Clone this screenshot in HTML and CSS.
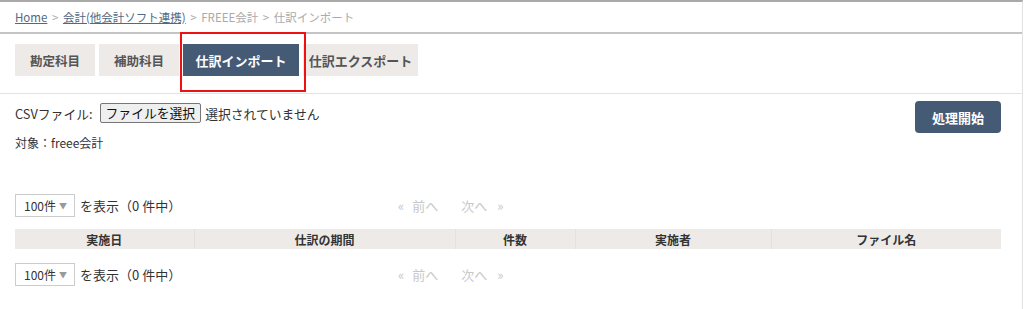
FILE: index.html
```html
<!DOCTYPE html>
<html lang="ja">
<head>
    <meta charset="UTF-8">
    <title>仕訳インポート</title>
    <link rel="stylesheet" href="styles.css">
</head>
<body>
    <div class="page">
        <div class="breadcrumb">
            <a href="#">Home</a>
            <span class="sep">&gt;</span>
            <a href="#">会計(他会計ソフト連携)</a>
            <span class="sep">&gt;</span>
            <span class="crumb">FREEE会計</span>
            <span class="sep">&gt;</span>
            <span class="crumb">仕訳インポート</span>
        </div>
        <div class="tabs">
            <a class="tab" href="#">勘定科目</a>
            <a class="tab" href="#">補助科目</a>
            <a class="tab active" href="#">仕訳インポート</a>
            <a class="tab" href="#">仕訳エクスポート</a>
            <div class="highlight"></div>
        </div>
        <div class="content">
            <div class="import-row">
                <div class="import-form">
                    <div class="file-row">
                        <span>CSVファイル:</span>
                        <span class="file-btn">ファイルを選択</span>
                        <span>選択されていません</span>
                    </div>
                    <div class="target">対象：freee会計</div>
                </div>
                <button class="start-btn">処理開始</button>
            </div>

            <div class="pager">
                <div class="per-page">
                    <span class="select">100件 <span class="caret">▼</span></span>
                    <span>を表示（0 件中）</span>
                </div>
                <div class="paging">
                    <span>«</span><span class="prev">前へ</span><span class="next">次へ</span><span>»</span>
                </div>
            </div>

            <table class="list">
                <thead>
                    <tr>
                        <th class="c1">実施日</th>
                        <th class="c2">仕訳の期間</th>
                        <th class="c3">件数</th>
                        <th class="c4">実施者</th>
                        <th class="c5">ファイル名</th>
                    </tr>
                </thead>
            </table>

            <div class="pager">
                <div class="per-page">
                    <span class="select">100件 <span class="caret">▼</span></span>
                    <span>を表示（0 件中）</span>
                </div>
                <div class="paging">
                    <span>«</span><span class="prev">前へ</span><span class="next">次へ</span><span>»</span>
                </div>
            </div>
        </div>
    </div>
</body>
</html>
```

FILE: styles.css
```css
* {
    margin: 0;
    padding: 0;
    box-sizing: border-box;
}
body {
    font-family: "Noto Sans CJK JP", "Noto Sans", sans-serif;
    font-size: 12px;
    color: #333;
    background: #fff;
}
.page {
    width: 1023px;
    height: 309px;
    border-top: 2px solid #a9a9a9;
    border-right: 1px solid #e2e2e2;
}
.breadcrumb {
    height: 32px;
    padding: 7px 15px 0;
    border-bottom: 2px solid #c4c4c4;
    color: #aaa;
    font-size: 11.5px;
}
.breadcrumb a {
    color: #4e6a86;
}
.breadcrumb .sep {
    margin: 0 2px;
}
.tabs {
    position: relative;
    display: flex;
    gap: 4px;
    padding: 10px 15px 17px;
    border-bottom: 1px solid #e3e3e3;
}
.tab {
    display: flex;
    align-items: center;
    justify-content: center;
    height: 32px;
    width: 80px;
    background: #eeeae8;
    color: #555;
    font-weight: bold;
    font-size: 12.5px;
    text-decoration: none;
}
.tab:nth-child(3) {
    width: 116px;
    font-size: 13px;
}
.tab:nth-child(4) {
    width: 115px;
    font-size: 13px;
}
.tab.active {
    background: #455a75;
    color: #fff;
}
.highlight {
    position: absolute;
    left: 180px;
    top: -2px;
    width: 126px;
    height: 60px;
    border: 2px solid #ee1111;
}
.content {
    padding: 0 21px 0 15px;
}
.import-row {
    display: flex;
    justify-content: space-between;
    padding-top: 8px;
    height: 100px;
}
.file-row {
    display: flex;
    align-items: center;
    font-size: 12.8px;
    height: 22px;
}
.file-btn {
    display: inline-block;
    margin: 0 4px 0 7px;
    padding: 0 5px;
    height: 20px;
    line-height: 18px;
    border: 1px solid #777;
    border-radius: 2px;
    background: #efefef;
    color: #111;
}
.target {
    margin-top: 10px;
    font-size: 12px;
}
.start-btn {
    width: 86px;
    height: 32px;
    margin-top: -1px;
    border: none;
    border-radius: 4px;
    background: #455a75;
    color: #fff;
    font-family: inherit;
    font-weight: bold;
    font-size: 13px;
}
.pager {
    display: grid;
    grid-template-columns: 383px 1fr;
    align-items: center;
    height: 23px;
}
.per-page {
    display: flex;
    align-items: center;
    gap: 5px;
    font-size: 13px;
}
.select {
    display: inline-flex;
    align-items: center;
    justify-content: space-between;
    width: 60px;
    height: 23px;
    padding: 0 7px 0 8px;
    border: 1px solid #ccc;
    color: #333;
    font-size: 12px;
}
.caret {
    color: #999;
    font-size: 8px;
}
.paging {
    display: flex;
    color: #c8c8c8;
    font-size: 13px;
}
.paging .prev {
    margin: 0 23px 0 8px;
}
.paging .next {
    margin-right: 10px;
}
.list {
    width: 100%;
    margin: 12px 0 14px;
    border-collapse: collapse;
}
.list th {
    height: 20px;
    background: #eeeae8;
    border-left: 1px solid #e4e0de;
    font-size: 12px;
    color: #333;
}
.list th:first-child {
    border-left: none;
}
.c1 { width: 179px; }
.c2 { width: 261px; }
.c3 { width: 120px; }
.c4 { width: 196px; }
```
